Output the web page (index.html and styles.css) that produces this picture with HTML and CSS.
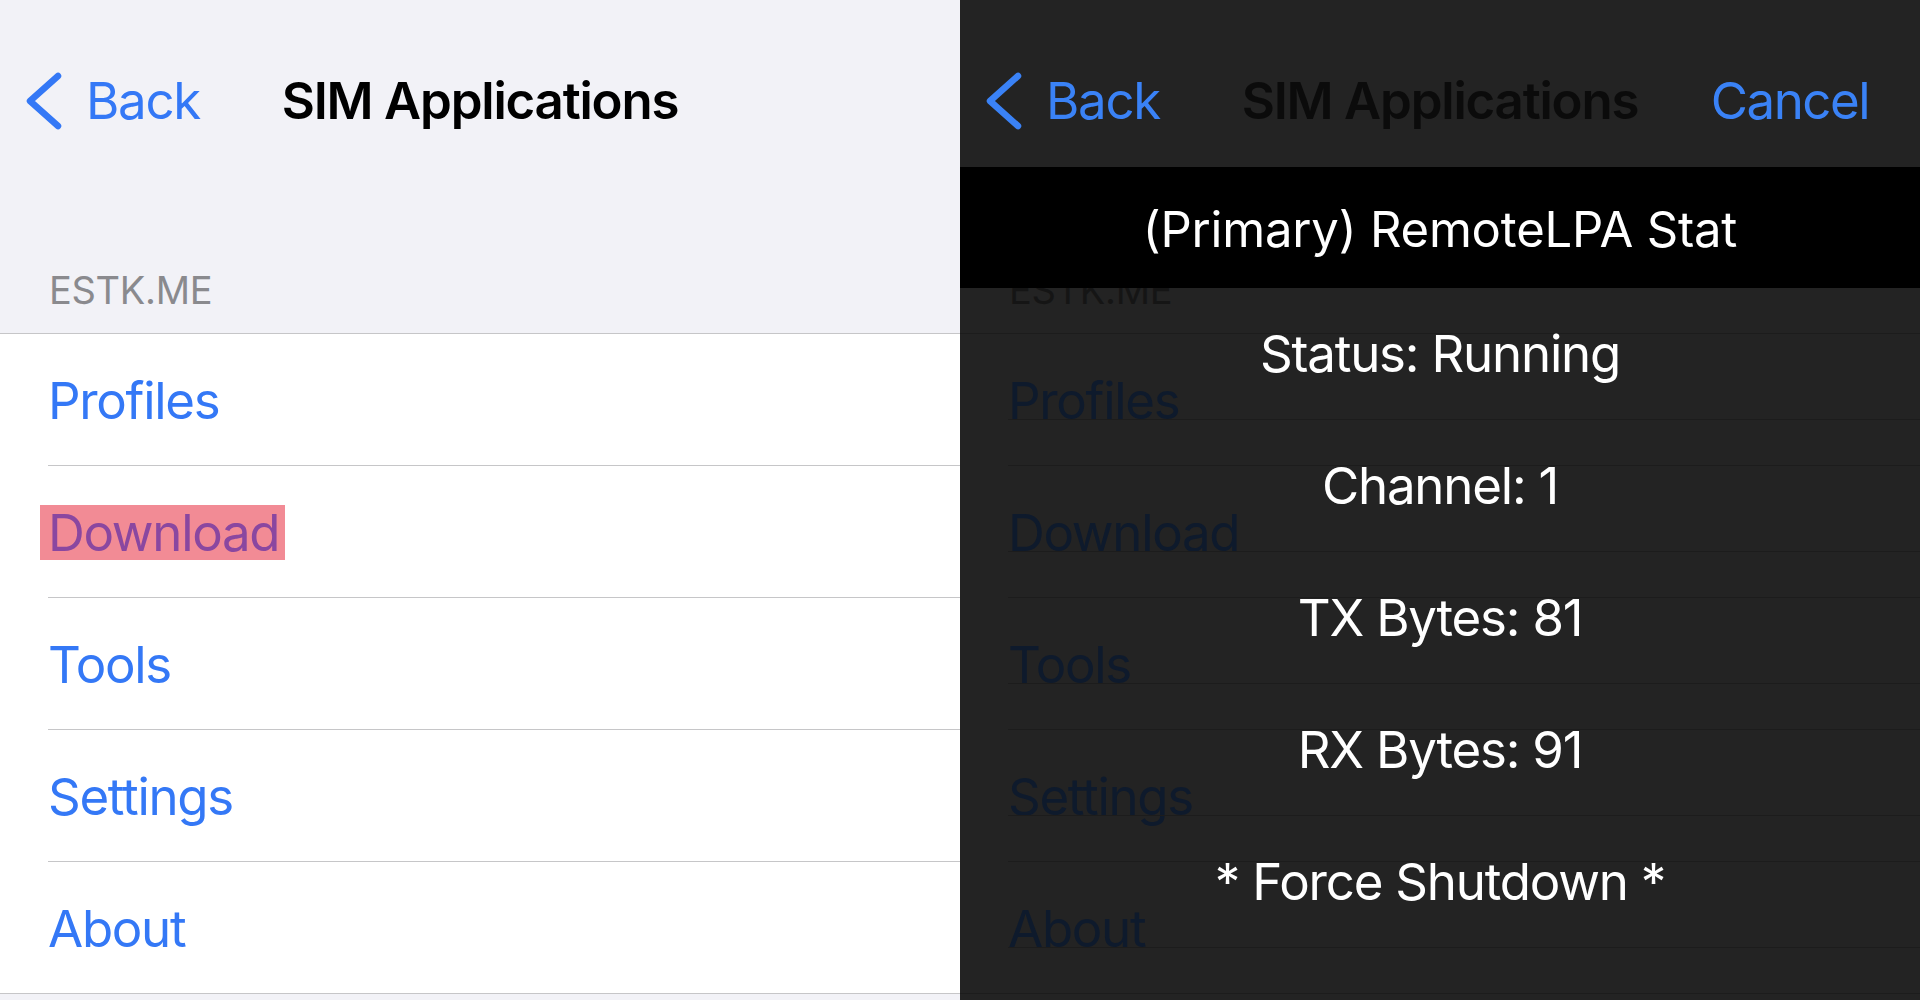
FILE: index.html
```html
<!DOCTYPE html>
<html lang="en">
<head>
<meta charset="utf-8">
<title>SIM Applications</title>
<link rel="stylesheet" href="styles.css">
</head>
<body>
<div class="screen">
  <section class="panel light">
    <header class="nav">
      <div class="nav-left">
        <svg class="chev" viewBox="0 0 40 58" width="40" height="58"><path d="M34 4 L6 29 L34 54"/></svg>
        <span class="nav-btn">Back</span>
      </div>
      <h1 class="nav-title">SIM Applications</h1>
      <div class="nav-right"></div>
    </header>
    <div class="section-header">ESTK.ME</div>
    <ul class="list">
      <li class="row"><span class="row-text">Profiles</span></li>
      <li class="row"><span class="row-text mark">Download</span></li>
      <li class="row"><span class="row-text">Tools</span></li>
      <li class="row"><span class="row-text">Settings</span></li>
      <li class="row"><span class="row-text">About</span></li>
    </ul>
  </section>

  <section class="panel dark">
    <header class="nav">
      <div class="nav-left">
        <svg class="chev" viewBox="0 0 40 58" width="40" height="58"><path d="M34 4 L6 29 L34 54"/></svg>
        <span class="nav-btn">Back</span>
      </div>
      <h1 class="nav-title">SIM Applications</h1>
      <div class="nav-right"><span class="nav-btn">Cancel</span></div>
    </header>
    <div class="section-header">ESTK.ME</div>
    <ul class="list">
      <li class="row"><span class="row-text">Profiles</span></li>
      <li class="row"><span class="row-text">Download</span></li>
      <li class="row"><span class="row-text">Tools</span></li>
      <li class="row"><span class="row-text">Settings</span></li>
      <li class="row"><span class="row-text">About</span></li>
    </ul>

    <div class="sheet">
      <div class="sheet-title">(Primary) RemoteLPA Stat</div>
      <div class="sheet-row">Status: Running</div>
      <div class="sheet-row">Channel: 1</div>
      <div class="sheet-row">TX Bytes: 81</div>
      <div class="sheet-row">RX Bytes: 91</div>
      <div class="sheet-row">* Force Shutdown *</div>
    </div>
  </section>
</div>
</body>
</html>
```

FILE: styles.css
```css
* { box-sizing: border-box; }
html, body {
  margin: 0;
  padding: 0;
  width: 1920px;
  height: 1000px;
  overflow: hidden;
}
body {
  font-family: Inter, "Liberation Sans", "Noto Sans", sans-serif;
}
.screen {
  display: grid;
  grid-template-columns: 960px 960px;
  height: 1000px;
}
.panel {
  position: relative;
  height: 1000px;
  overflow: hidden;
}
.light { background: #f2f2f7; }
.dark { background: #232323; }

/* nav bar */
.nav {
  height: 200px;
  display: grid;
  grid-template-columns: 1fr auto 1fr;
  align-items: center;
  padding-top: 1px;
}
.nav-left {
  display: flex;
  align-items: center;
  padding-left: 24px;
}
.nav-right {
  display: flex;
  justify-content: flex-end;
  padding-right: 51px;
}
.chev { display: block; }
.chev path {
  fill: none;
  stroke: #3478f6;
  stroke-width: 6.5;
  stroke-linecap: round;
  stroke-linejoin: round;
}
.nav-btn {
  font-size: 51px;
  letter-spacing: -1.3px;
  color: #3478f6;
  margin-left: 22px;
}
.nav-right .nav-btn {
  margin-left: 0;
  letter-spacing: -1.5px;
}
.nav-title {
  margin: 0;
  font-size: 51px;
  font-weight: 600;
  letter-spacing: -1.2px;
  color: #000;
}

/* section header */
.section-header {
  height: 133px;
  padding: 67px 0 0 49px;
  font-size: 38px;
  line-height: 46px;
  letter-spacing: -0.3px;
  color: #8a8a8e;
}

/* list */
.list {
  margin: 0;
  padding: 0;
  list-style: none;
  border-top: 1px solid #c6c6c8;
  border-bottom: 1px solid #c6c6c8;
  background: #fff;
}
.row {
  height: 132px;
  margin-left: 48px;
  padding-top: 1px;
  border-bottom: 1px solid #c6c6c8;
  display: flex;
  align-items: center;
}
.row:last-child {
  height: 131px;
  border-bottom: none;
}
.row-text {
  font-size: 51px;
  letter-spacing: -1.3px;
  color: #3478f6;
}
.mark {
  display: inline-block;
  height: 55px;
  line-height: 55px;
  margin-left: -8px;
  padding: 0 6px 0 8px;
  background: #f28b95;
  color: #8a47a0;
}

/* dark panel */
.dark .nav-title { color: #0b0b0b; }
.dark .chev path { stroke: #3a82f6; }
.dark .nav-btn { color: #3a82f6; }
.dark .section-header { color: #151515; }
.dark .list {
  background: #232323;
  border-color: #1c1c1c;
}
.dark .row { border-color: #1c1c1c; }
.dark .row-text { color: #0e1a2c; }

/* overlay sheet */
.sheet {
  position: absolute;
  top: 167px;
  left: 0;
  right: 0;
}
.sheet-title {
  height: 121px;
  background: #000;
  color: #fff;
  font-size: 49px;
  letter-spacing: -0.2px;
  display: flex;
  align-items: center;
  justify-content: center;
  padding-top: 4px;
}
.sheet-row {
  position: relative;
  height: 132px;
  padding-bottom: 1px;
  display: flex;
  align-items: center;
  justify-content: center;
  color: #fff;
  font-size: 51px;
  letter-spacing: -1.2px;
}
.sheet-row::after {
  content: "";
  position: absolute;
  left: 48px;
  right: 0;
  bottom: 0;
  height: 1px;
  background: #1c1c1c;
}
```
